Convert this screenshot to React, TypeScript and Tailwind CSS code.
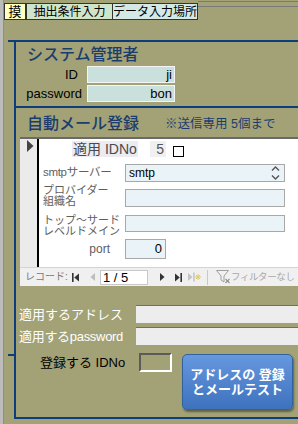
import React from "react";

const NAVY = "bg-[#0d3d7a]";

function FirstIcon() {
  return (
    <svg width="7" height="9" viewBox="0 0 7 9" className="shrink-0">
      <rect x="0" y="0" width="1.6" height="9" fill="#333" />
      <polygon points="7,0.5 7,8.5 2.2,4.5" fill="#333" />
    </svg>
  );
}
function PrevIcon() {
  return (
    <svg width="5" height="8" viewBox="0 0 5 8" className="shrink-0">
      <polygon points="5,0 5,8 0.5,4" fill="#bdbdbd" />
    </svg>
  );
}
function NextIcon() {
  return (
    <svg width="5" height="8" viewBox="0 0 5 8" className="shrink-0">
      <polygon points="0,0 0,8 4.5,4" fill="#333" />
    </svg>
  );
}
function LastIcon() {
  return (
    <svg width="7" height="9" viewBox="0 0 7 9" className="shrink-0">
      <polygon points="0,0.5 0,8.5 4.8,4.5" fill="#333" />
      <rect x="5.4" y="0" width="1.6" height="9" fill="#333" />
    </svg>
  );
}
function NewIcon() {
  return (
    <svg width="13" height="10" viewBox="0 0 13 10" className="shrink-0">
      <polygon points="0,1 0,9 4.5,5" fill="#c4c4c4" />
      <rect x="5.2" y="0.5" width="1.5" height="9" fill="#c4c4c4" />
      <g stroke="#e8c860" strokeWidth="1">
        <line x1="10" y1="2" x2="10" y2="8" />
        <line x1="7" y1="5" x2="13" y2="5" />
        <line x1="8" y1="3" x2="12" y2="7" />
        <line x1="12" y1="3" x2="8" y2="7" />
      </g>
    </svg>
  );
}
function FilterIcon() {
  return (
    <svg width="15" height="14" viewBox="0 0 15 14" className="shrink-0">
      <path d="M0.5,0.5 H12.5 L8,6 V12 L5,10 V6 Z" fill="none" stroke="#a0a0a0" strokeWidth="1" />
      <g stroke="#909090" strokeWidth="1.1">
        <line x1="9.5" y1="9" x2="13.5" y2="13" />
        <line x1="13.5" y1="9" x2="9.5" y2="13" />
      </g>
    </svg>
  );
}
function Spinner() {
  return (
    <svg width="11" height="16" viewBox="0 0 11 16" className="shrink-0">
      <path d="M2,5.5 L5.5,2 L9,5.5" fill="none" stroke="#555" strokeWidth="1.4" />
      <path d="M2,10.5 L5.5,14 L9,10.5" fill="none" stroke="#555" strokeWidth="1.4" />
    </svg>
  );
}

export default function App() {
  return (
    <div className="w-[298px] h-[424px] overflow-hidden flex bg-[#a2a276] font-['Liberation_Sans','Noto_Sans_CJK_JP',sans-serif] text-black">
      <div className="w-[4px] shrink-0 bg-[#bcbcbc] border-r border-[#8e8e8e]" />
      <div className="flex-1 min-w-0 flex flex-col">
        {/* tabs */}
        <div className="h-[20px] flex items-start pt-[3px]">
          <div className="w-[22px] h-[17px] shrink-0 bg-[#ffffc0] border border-[#333] flex items-center justify-center text-[13px] leading-none">
            摸
          </div>
          <div className="w-[87px] h-[17px] shrink-0 bg-[#cfe5cb] border border-[#333] flex items-center justify-center text-[12px] leading-none">
            抽出条件入力
          </div>
          <div className="w-[85px] h-[17px] shrink-0 bg-[#d3e9e6] border border-l-0 border-[#333] flex items-center justify-center text-[12px] leading-none whitespace-nowrap">
            データ入力場所
          </div>
          <div className="flex-1 -mt-[2px] h-[6px] border-y border-[#7a7a7a]" />
        </div>

        <div className="h-[20px]" />
        <div className={`ml-[4px] h-[2px] ${NAVY}`} />

        {/* frame */}
        <div className="ml-[10px] h-[377px] border-l-2 border-b-2 border-[#0d3d7a] flex flex-col relative">
          <div className={`absolute -left-[8px] top-[312px] w-[6px] h-[2px] ${NAVY}`} />

          {/* box 1 */}
          <div className="h-[64px] flex flex-col">
            <div className="h-[24px] pl-[11px] pt-[4px] text-[16px] leading-[18px] font-medium text-[#1b3d6e] whitespace-nowrap">
              システム管理者
            </div>
            <div className="flex items-center h-[17px]">
              <div className="w-[62px] text-right text-[13px] leading-none">ID</div>
              <div className="ml-[9px] w-[88px] h-[17px] bg-[#c9e0dd] border border-[#f4f4f4] text-right text-[13px] leading-[15px] pr-[2px]">
                ji
              </div>
            </div>
            <div className="flex items-center h-[17px] mt-[2px]">
              <div className="w-[66px] text-right text-[13px] leading-none">password</div>
              <div className="ml-[5px] w-[88px] h-[17px] bg-[#c9e0dd] border border-[#f4f4f4] text-right text-[13px] leading-[15px] pr-[2px]">
                bon
              </div>
            </div>
          </div>
          <div className={`h-[2px] ${NAVY}`} />

          {/* box 2 title */}
          <div className="h-[29px] flex items-start pt-[7px] text-[#1b3d6e] whitespace-nowrap">
            <div className="w-[149px] pl-[11px] text-[16px] leading-[18px] font-medium">自動メール登録</div>
            <div className="mt-[2px] text-[12.5px] leading-[14px]">※送信専用 5個まで</div>
          </div>

          {/* subform */}
          <div className="ml-[4px] flex flex-col border-t-2 border-[#6a6a6a]">
            <div className="flex h-[128px]">
              <div className="w-[19px] shrink-0 bg-[#ebebeb] border-r-2 border-black pl-[7px] pt-[1px]">
                <svg width="7" height="12" viewBox="0 0 7 12">
                  <polygon points="0,0 0,12 6.5,6" fill="#444" />
                </svg>
              </div>
              <div className="flex-1 bg-white flex flex-col">
                <div className="mt-[2px] h-[16px] flex items-start">
                  <div className="ml-[33px] w-[66px] h-[16px] bg-[#ecebf2] text-[14px] text-[#4a4a4a] leading-none flex items-center justify-center whitespace-nowrap">
                    適用 IDNo
                  </div>
                  <div className="ml-[12px] w-[16px] h-[16px] bg-[#f0f0f0] text-right text-[14px] text-[#555] leading-[16px] pr-[2px]">
                    5
                  </div>
                  <div className="ml-[7px] mt-[5px] w-[11px] h-[11px] border-[1.5px] border-black bg-white" />
                </div>

                <div className="mt-[7px] h-[18px] flex items-center">
                  <div className="w-[86px] pl-[4px] text-[11.5px] text-[#5e5e5e] leading-none whitespace-nowrap tracking-[-0.3px]">smtpサーバー</div>
                  <div className="w-[160px] h-[18px] bg-[#eaf4f8] border border-[#a8a8a8] flex items-center pl-[3px] pr-[3px] text-[12px] leading-none">
                    <span>smtp</span>
                    <span className="ml-auto"><Spinner /></span>
                  </div>
                </div>

                <div className="mt-[7px] h-[18px] flex items-start">
                  <div className="w-[86px] pl-[4px] -mt-[4px] text-[11px] text-[#5e5e5e] leading-[11px]">
                    プロバイダー
                    <br />
                    組織名
                  </div>
                  <div className="w-[160px] h-[18px] bg-[#eaf4f8] border border-[#a8a8a8]" />
                </div>

                <div className="mt-[8px] h-[17px] flex items-start">
                  <div className="w-[86px] pl-[4px] text-[11px] text-[#5e5e5e] leading-[11px] whitespace-nowrap">
                    トップ～サード
                    <br />
                    レベルドメイン
                  </div>
                  <div className="w-[160px] h-[17px] bg-[#eaf4f8] border border-[#a8a8a8]" />
                </div>

                <div className="mt-[7px] h-[20px] flex items-center">
                  <div className="w-[71px] text-right text-[12px] text-[#5e5e5e] leading-none">port</div>
                  <div className="ml-[15px] w-[41px] h-[20px] bg-[#eaf4f8] border border-[#a8a8a8] text-right text-[13px] leading-[18px] pr-[3px]">
                    0
                  </div>
                </div>
              </div>
            </div>

            {/* navigation bar */}
            <div className="h-[19px] bg-[#f0f0f0] border-t border-[#d4d4d4] flex items-center overflow-hidden whitespace-nowrap">
              <span className="w-[52px] shrink-0 pl-[5px] text-[10px] text-[#777] leading-none">レコード:</span>
              <FirstIcon />
              <span className="ml-[11px]"><PrevIcon /></span>
              <div className="ml-[5px] w-[48px] h-[15px] shrink-0 bg-white border border-[#c8c8c8] text-[13px] leading-[13px] pl-[2px]">
                1 / 5
              </div>
              <span className="ml-[12px]"><NextIcon /></span>
              <span className="ml-[10px]"><LastIcon /></span>
              <span className="ml-[6px]"><NewIcon /></span>
              <div className="ml-[6px] w-[1px] h-[15px] shrink-0 bg-[#c8c8c8]" />
              <span className="ml-[8px]"><FilterIcon /></span>
              <span className="text-[9.5px] text-[#a8a8a8] leading-none tracking-[-0.4px]">フィルターなし</span>
            </div>
          </div>

          {/* address fields */}
          <div className="mt-[19px] h-[18px] flex items-center">
            <div className="w-[120px] pl-[3px] text-[13px] text-white leading-none whitespace-nowrap">適用するアドレス</div>
            <div className="flex-1 h-[18px] bg-[#ededed] border-t border-[#6e6e6e]" />
          </div>
          <div className="mt-[4px] h-[18px] flex items-center">
            <div className="w-[120px] pl-[3px] text-[13px] text-white leading-none whitespace-nowrap tracking-[-0.3px]">適用するpassword</div>
            <div className="flex-1 h-[18px] bg-[#ededed] border-t border-[#6e6e6e]" />
          </div>

          <div className="mt-[8px] flex items-start">
            <div className="w-[123px] h-[19px] pl-[24px] flex items-center text-[13px] leading-none whitespace-nowrap">
              登録する IDNo
            </div>
            <div className="w-[33px] h-[19px] border-2 border-t-[#5a5a5a] border-l-[#5a5a5a] border-r-white border-b-white" />
            <button className="ml-[10px] mt-[1px] w-[111px] h-[56px] rounded-[5px] bg-gradient-to-b from-[#6598de] to-[#3f72be] border border-[#33619e] shadow-[1px_2px_2px_rgba(0,0,0,0.4)] text-white font-bold text-[13px] leading-[15px] flex flex-col items-center justify-center">
              <span>アドレスの 登録</span>
              <span>とメールテスト</span>
            </button>
          </div>
        </div>
      </div>
    </div>
  );
}
